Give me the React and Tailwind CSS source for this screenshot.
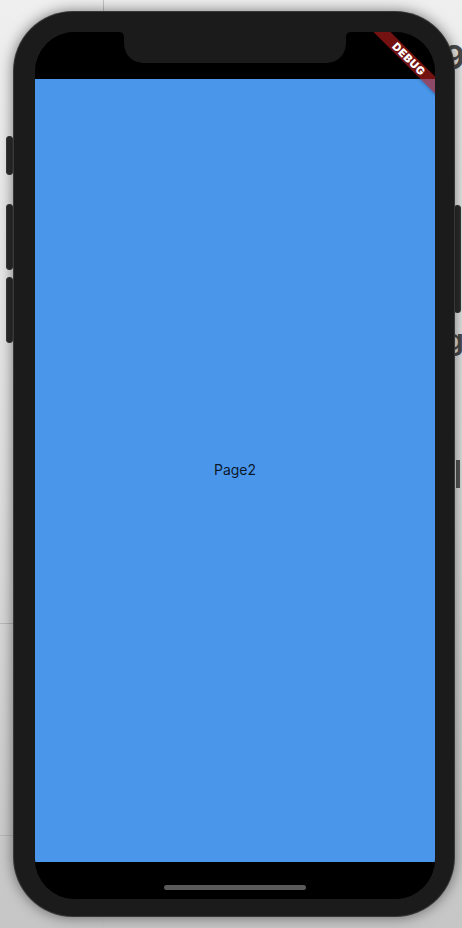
import React from "react";

const SideButton = ({ className }) => (
  <div
    className={`absolute w-[7px] rounded-[3px] bg-[#2b2b2b] border border-[#3a3a3a] ${className}`}
  />
);

const Notch = () => (
  <svg
    className="absolute left-1/2 top-0 -translate-x-1/2"
    width="234"
    height="32"
    viewBox="0 0 234 32"
  >
    <path
      d="M0 0 H234 C229 0 228 2 228 6 V10 C228 22 221 31 207 31 H27 C13 31 6 22 6 10 V6 C6 2 5 0 0 0 Z"
      fill="#1b1b1b"
    />
  </svg>
);

const DebugBanner = () => (
  <div className="absolute left-[324px] top-[21px] w-[100px] h-[12px] rotate-45 bg-[#b71c1c]/[0.63] shadow-[0_0_4px_rgba(0,0,0,0.4)] flex items-center justify-center">
    <span className="text-white text-[11px] leading-[12px] font-black tracking-[0.6px] font-['Inter',sans-serif]">
      DEBUG
    </span>
  </div>
);

export default function App() {
  return (
    <div className="relative w-[462px] h-[928px] overflow-hidden bg-gradient-to-b from-[#efefef] via-[#e0e0e0] to-[#c6c6c6] font-['Inter',sans-serif]">
      {/* 背景里的窗口线条 */}
      <div className="absolute left-[103px] top-0 w-px h-full bg-[#c4c4c4]" />
      <div className="absolute left-0 top-[623px] w-[40px] h-px bg-[#b9b9b9]" />
      <div className="absolute left-0 top-[835px] w-[40px] h-px bg-[#b9b9b9]" />
      <span className="absolute left-[444px] top-[42px] text-[32px] leading-none font-bold text-[#4a4a4a]">9</span>
      <span className="absolute left-[446px] top-[326px] text-[28px] leading-none font-bold text-[#4a4a4a]">g</span>
      <div className="absolute left-[456px] top-[460px] w-[4px] h-[28px] bg-[#555]" />

      {/* 机身 */}
      <div className="relative ml-[13px] mt-[11px] w-[442px] h-[906px]">
        <SideButton className="-left-[7px] top-[125px] h-[39px]" />
        <SideButton className="-left-[7px] top-[193px] h-[66px]" />
        <SideButton className="-left-[7px] top-[266px] h-[66px]" />
        <SideButton className="-right-[6px] top-[194px] h-[108px]" />

        <div className="relative w-full h-full rounded-[60px] bg-[#1b1b1b] pt-[20px] pl-[21px] pr-[21px] pb-[19px] shadow-[0_0_14px_rgba(0,0,0,0.5)] border border-[#555]/50">
          <div className="relative w-[400px] h-[867px] rounded-[40px] overflow-hidden bg-black flex flex-col">
            <div className="h-[47px] shrink-0 bg-black" />
            <div className="flex-1 bg-[#4996ea] flex items-center justify-center">
              <span className="text-[14px] text-black/85 -mt-[2px]">Page2</span>
            </div>
            <div className="h-[37px] shrink-0 bg-black flex justify-center pt-[23px]">
              <div className="w-[142px] h-[5px] rounded-full bg-[#595959]" />
            </div>
            <Notch />
            <DebugBanner />
          </div>
        </div>
      </div>
    </div>
  );
}
